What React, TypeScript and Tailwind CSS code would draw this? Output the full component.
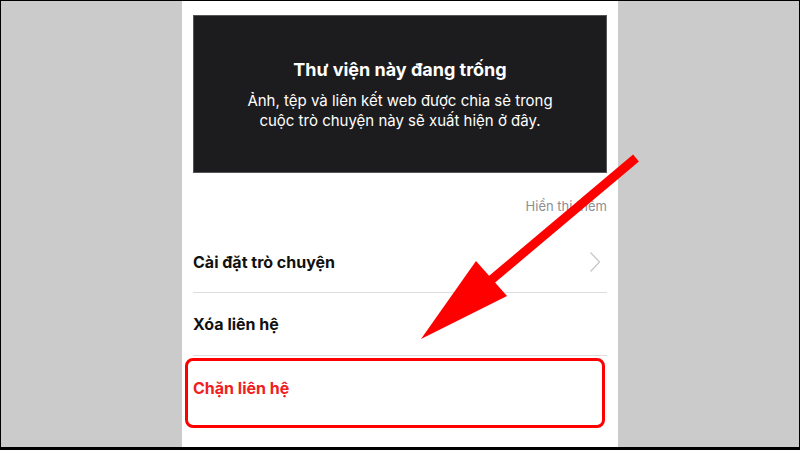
import React from 'react';

const font = { fontFamily: 'Inter, "Noto Sans", sans-serif' };

const Arrow: React.FC = () => (
  <svg className="pointer-events-none absolute left-0 top-0" width="800" height="450" viewBox="0 0 800 450">
    <line x1="635" y1="157" x2="483" y2="285" stroke="#ff0000" strokeWidth="9" />
    <polygon points="420,338 475,260 506,295" fill="#ff0000" />
  </svg>
);

const Chevron: React.FC = () => (
  <svg width="12" height="22" viewBox="0 0 12 22" fill="none">
    <path d="M1.5 1.5 L10.5 11 L1.5 20.5" stroke="#c7c7cc" strokeWidth="1.3" />
  </svg>
);

export default function App() {
  return (
    <div
      className="relative w-[800px] h-[450px] overflow-hidden bg-[#cbcbcb] border-t border-l border-r border-b-[3px] border-black flex justify-center"
      style={font}
    >
      <div className="w-[436px] h-full bg-white px-[11px] pt-[14px] flex flex-col">
        {/* empty library */}
        <div className="h-[158px] bg-[#1c1c1e] border border-[#555] flex flex-col items-center justify-center text-center">
          <h2 className="text-white text-[18px] font-bold leading-[24px] mb-[9px]">Thư viện này đang trống</h2>
          <p className="text-white text-[15px] leading-[20px] w-[330px]">
            Ảnh, tệp và liên kết web được chia sẻ trong cuộc trò chuyện này sẽ xuất hiện ở đây.
          </p>
        </div>

        <div className="h-[58px] flex items-center justify-end pt-[10px]">
          <span className="text-[13px] text-[#8e8e93]">Hiển thị thêm</span>
        </div>

        <div className="h-[62px] flex items-center justify-between border-b border-[#dedede] pr-[6px]">
          <span className="text-[16px] font-bold text-[#111]">Cài đặt trò chuyện</span>
          <Chevron />
        </div>
        <div className="h-[63px] flex items-center border-b border-[#dedede]">
          <span className="text-[16px] font-bold text-[#111]">Xóa liên hệ</span>
        </div>
        <div className="mt-[2px] -ml-[8px] mr-[2px] h-[70px] flex items-center pl-[5px] pb-[10px] border-[3px] border-[#ff0000] rounded-[8px]">
          <span className="text-[16px] font-bold text-[#f02020]">Chặn liên hệ</span>
        </div>
      </div>
      <Arrow />
    </div>
  );
}
